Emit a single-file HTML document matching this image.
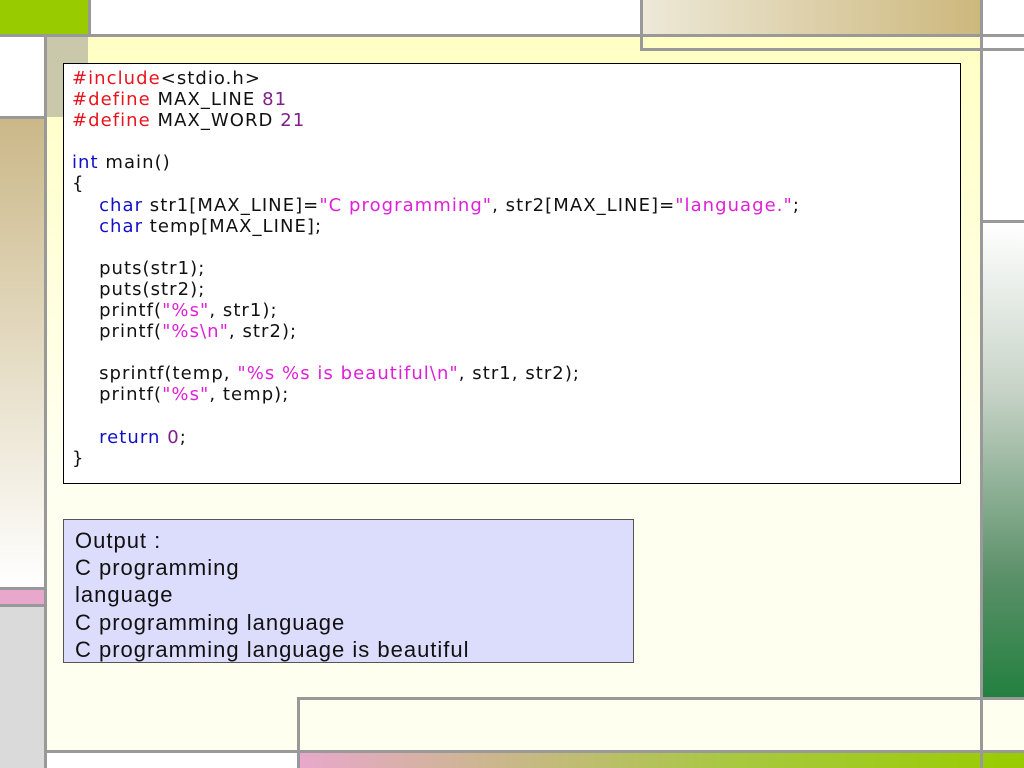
<!DOCTYPE html>
<html><head><style>
*{margin:0;padding:0;box-sizing:border-box}
body{width:1024px;height:768px;position:relative;overflow:hidden;background:#fff;font-family:"DejaVu Sans","Liberation Sans",sans-serif}
.a{position:absolute}
.g{background:#999}
pre{font-family:"DejaVu Sans","Liberation Sans",sans-serif;font-size:18px;line-height:21.1px;color:#111;letter-spacing:1.05px}
.r{color:#e8141e}.b{color:#1010c8}.m{color:#e020d8}.p{color:#80208a}
</style></head><body>
<div class="a" style="left:47px;top:37px;width:933px;height:716px;background:linear-gradient(#ffffc4,#fffff0 60%,#fffff0)"></div>
<div class="a" style="left:0;top:0;width:88px;height:34px;background:#99cc00"></div>
<div class="a" style="left:0;top:37px;width:44px;height:80px;background:#fff"></div>
<div class="a" style="left:47px;top:37px;width:41px;height:80px;background:#c9c8aa"></div>
<div class="a" style="left:0;top:119px;width:44px;height:469px;background:linear-gradient(#cbb888,#fff)"></div>
<div class="a" style="left:0;top:590px;width:44px;height:14px;background:#e8a8cc"></div>
<div class="a" style="left:0;top:607px;width:44px;height:161px;background:#dadada"></div>
<div class="a" style="left:643px;top:0;width:337px;height:34px;background:linear-gradient(90deg,#ede8d8,#cdb87c)"></div>
<div class="a" style="left:983px;top:223px;width:41px;height:474px;background:linear-gradient(#fff,#c8d4c8 35%,#5a9068 75%,#238040)"></div>
<div class="a" style="left:300px;top:753px;width:724px;height:15px;background:linear-gradient(90deg,#e8a8cc,#a8c840 60%,#99cc00)"></div>
<div class="a" style="left:983px;top:700px;width:41px;height:50px;background:#fffff0"></div>
<div class="a g" style="left:0;top:34px;width:1024px;height:3px"></div>
<div class="a g" style="left:88px;top:0;width:3px;height:37px"></div>
<div class="a g" style="left:44px;top:37px;width:3px;height:731px"></div>
<div class="a g" style="left:0;top:116px;width:47px;height:3px"></div>
<div class="a g" style="left:0;top:587px;width:44px;height:3px"></div>
<div class="a g" style="left:0;top:604px;width:44px;height:3px"></div>
<div class="a g" style="left:640px;top:0;width:3px;height:50px"></div>
<div class="a g" style="left:640px;top:48px;width:384px;height:3px"></div>
<div class="a g" style="left:980px;top:0;width:3px;height:768px"></div>
<div class="a g" style="left:983px;top:220px;width:41px;height:3px"></div>
<div class="a g" style="left:297px;top:697px;width:727px;height:3px"></div>
<div class="a g" style="left:297px;top:697px;width:3px;height:71px"></div>
<div class="a g" style="left:47px;top:750px;width:977px;height:3px"></div>
<div class="a" style="left:63px;top:63px;width:898px;height:421px;background:#fff;border:1px solid #000;padding:4px 0 0 8px">
<pre><span class="r">#include</span>&lt;stdio.h&gt;
<span class="r">#define</span> MAX_LINE <span class="p">81</span>
<span class="r">#define</span> MAX_WORD <span class="p">21</span>

<span class="b">int</span> main()
{
    <span class="b">char</span> str1[MAX_LINE]=<span class="m">"C programming"</span>, str2[MAX_LINE]=<span class="m">"language."</span>;
    <span class="b">char</span> temp[MAX_LINE];

    puts(str1);
    puts(str2);
    printf(<span class="m">"%s"</span>, str1);
    printf(<span class="m">"%s\n"</span>, str2);

    sprintf(temp, <span class="m">"%s %s is beautiful\n"</span>, str1, str2);
    printf(<span class="m">"%s"</span>, temp);

    <span class="b">return</span> <span class="p">0</span>;
}</pre></div>
<div class="a" style="left:63px;top:519px;width:571px;height:144px;background:#dcdcfc;border:1px solid #555;padding:7px 0 0 11px;font-family:'Liberation Sans',sans-serif;font-size:22px;line-height:27.2px;letter-spacing:1px;color:#111;overflow:hidden">Output :<br>C programming<br>language<br>C programming language<br>C programming language is beautiful</div>
</body></html>
